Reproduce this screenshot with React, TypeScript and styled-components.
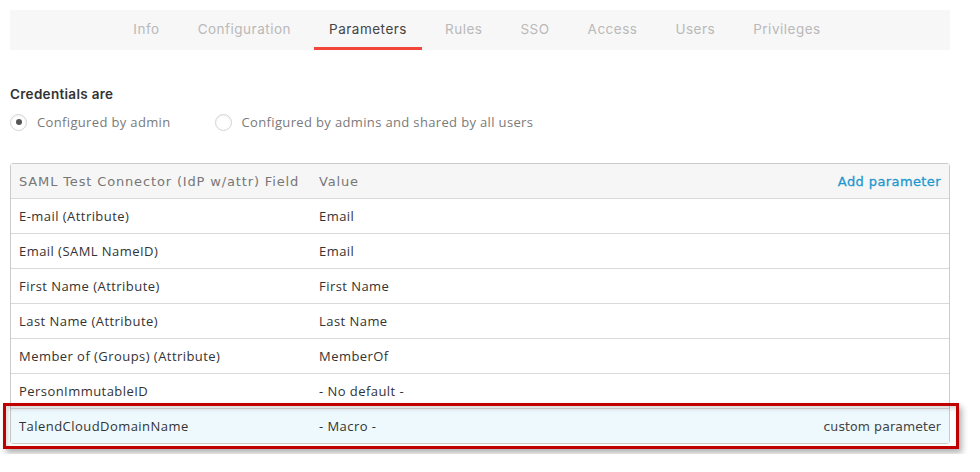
import styled, { createGlobalStyle } from 'styled-components';

const GlobalStyle = createGlobalStyle`
  body {
    margin: 0;
    background: #fff;
    font-family: 'Open Sans', 'Liberation Sans', sans-serif;
  }
`;

const tabs = ['Info', 'Configuration', 'Parameters', 'Rules', 'SSO', 'Access', 'Users', 'Privileges'];

const rows = [
  { field: 'E-mail (Attribute)', value: 'Email' },
  { field: 'Email (SAML NameID)', value: 'Email' },
  { field: 'First Name (Attribute)', value: 'First Name' },
  { field: 'Last Name (Attribute)', value: 'Last Name' },
  { field: 'Member of (Groups) (Attribute)', value: 'MemberOf' },
  { field: 'PersonImmutableID', value: '- No default -' },
];

export default function App() {
  return (
    <Page>
      <GlobalStyle />
      <TabBar>
        {tabs.map((t) => (
          <Tab key={t} $active={t === 'Parameters'}>
            {t}
          </Tab>
        ))}
      </TabBar>

      <Credentials>
        <Title>Credentials are</Title>
        <RadioRow>
          <RadioOption>
            <Radio $checked />
            Configured by admin
          </RadioOption>
          <RadioOption>
            <Radio />
            Configured by admins and shared by all users
          </RadioOption>
        </RadioRow>
      </Credentials>

      <Table>
        <HeaderRow>
          <FieldCell>SAML Test Connector (IdP w/attr) Field</FieldCell>
          <ValueCell>Value</ValueCell>
          <AddLink>Add parameter</AddLink>
        </HeaderRow>
        {rows.map((r) => (
          <Row key={r.field}>
            <FieldCell>{r.field}</FieldCell>
            <ValueCell>{r.value}</ValueCell>
          </Row>
        ))}
        <Row $highlight>
          <FieldCell>TalendCloudDomainName</FieldCell>
          <ValueCell>- Macro -</ValueCell>
          <Note>custom parameter</Note>
          <Callout />
        </Row>
      </Table>
    </Page>
  );
}

const Page = styled.div`
  padding: 10px;
  width: 940px;
`;

const TabBar = styled.nav`
  display: flex;
  justify-content: center;
  height: 40px;
  padding-right: 6px;
  background: #f7f7f7;
`;

const Tab = styled.div<{ $active?: boolean }>`
  box-sizing: border-box;
  height: 40px;
  padding: 0 15px;
  margin: 0 4px;
  display: flex;
  align-items: center;
  border-bottom: 3px solid ${(p) => (p.$active ? '#f2463a' : 'transparent')};
  font-family: 'Inter', sans-serif;
  font-size: 13.5px;
  letter-spacing: 0.5px;
  color: ${(p) => (p.$active ? '#444' : '#b9b9b9')};
`;

const Credentials = styled.section`
  margin-top: 36px;
`;

const Title = styled.div`
  font-family: 'Inter', sans-serif;
  font-size: 13.5px;
  font-weight: 600;
  color: #333;
  letter-spacing: 0.3px;
`;

const RadioRow = styled.div`
  display: flex;
  gap: 44px;
  margin-top: 11px;
`;

const RadioOption = styled.label`
  display: flex;
  align-items: center;
  gap: 10px;
  font-size: 13px;
  letter-spacing: 0.35px;
  color: #7a7a7a;
`;

const Radio = styled.span<{ $checked?: boolean }>`
  box-sizing: border-box;
  width: 17px;
  height: 17px;
  border-radius: 50%;
  border: 1px solid #d4d4d4;
  background: #fff;
  box-shadow: inset 0 1px 2px rgba(0, 0, 0, 0.06);
  display: flex;
  align-items: center;
  justify-content: center;

  &::after {
    content: '';
    width: 6px;
    height: 6px;
    border-radius: 50%;
    background: ${(p) => (p.$checked ? '#555' : 'transparent')};
  }
`;

const Table = styled.div`
  margin-top: 32px;
  border: 1px solid #cbcbcb;
  border-radius: 3px;
`;

const Row = styled.div<{ $highlight?: boolean }>`
  position: relative;
  display: flex;
  align-items: center;
  height: 34px;
  padding: 0 8px;
  border-top: 1px solid #d9d9d9;
  background: ${(p) => (p.$highlight ? '#eef9fd' : '#fff')};
  font-size: 13px;
  letter-spacing: 0.45px;
  color: #333;
`;

const HeaderRow = styled(Row)`
  border-top: none;
  background: #f6f6f6;
  font-family: 'DejaVu Sans', sans-serif;
  font-size: 13px;
  letter-spacing: 0.85px;
  color: #777;
`;

const FieldCell = styled.div`
  width: 300px;
`;

const ValueCell = styled.div`
  flex: 1;
`;

const AddLink = styled.a`
  color: #1c98cf;
  letter-spacing: 0.4px;
  cursor: pointer;
  -webkit-text-stroke: 0.3px #1c98cf;
`;

const Note = styled.div`
  font-family: 'DejaVu Sans', sans-serif;
  font-size: 12.5px;
  color: #444;
  letter-spacing: 0.1px;
`;

const Callout = styled.div`
  position: absolute;
  left: -8px;
  right: -10px;
  top: -6px;
  bottom: -6px;
  border: 3px solid #c00000;
  box-shadow: 3px 4px 6px rgba(0, 0, 0, 0.3), inset 2px 3px 4px rgba(0, 0, 0, 0.15);
  pointer-events: none;
`;
